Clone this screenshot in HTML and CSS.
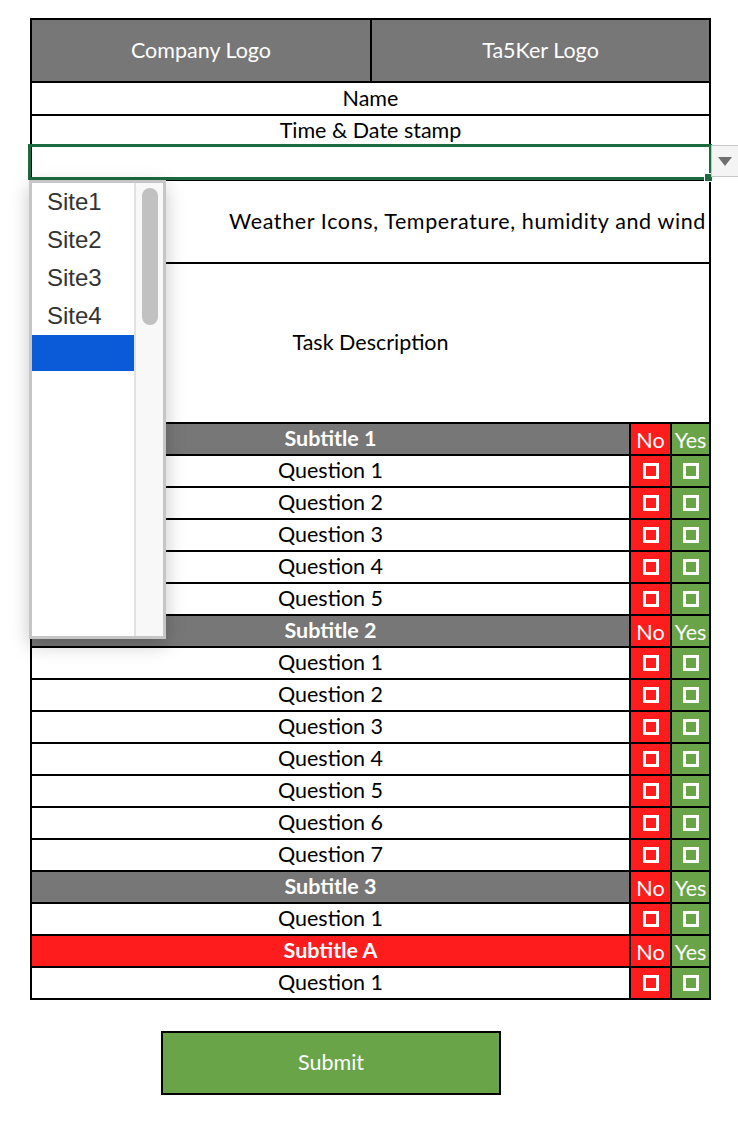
FILE: index.html
```html
<!DOCTYPE html>
<html>
<head>
<meta charset="utf-8">
<link rel="stylesheet" href="styles.css">
</head>
<body>
<div class="sheet">
  <div class="row head">
    <div class="cell">Company Logo</div>
    <div class="cell sep">Ta5Ker Logo</div>
  </div>
  <div class="row name"><div class="cell">Name</div></div>
  <div class="row time"><div class="cell">Time &amp; Date stamp</div></div>
  <div class="row select">
    <div class="selection"><span class="handle"></span></div>
    <div class="drop-btn"><span class="tri"></span></div>
    <div class="listbox">
      <div class="items">
        <div class="item">Site1</div>
        <div class="item">Site2</div>
        <div class="item">Site3</div>
        <div class="item">Site4</div>
        <div class="item active"></div>
      </div>
      <div class="scroll"><div class="thumb"></div></div>
    </div>
  </div>
  <div class="row weather"><div class="cell right wide">Weather Icons, Temperature, humidity and wind</div></div>
  <div class="row task"><div class="cell">Task Description</div></div>

  <div class="row q sub gray"><div class="cell">Subtitle 1</div><div class="no">No</div><div class="yes">Yes</div></div>
  <div class="row q"><div class="cell">Question 1</div><div class="no"><span class="box"></span></div><div class="yes"><span class="box"></span></div></div>
  <div class="row q"><div class="cell">Question 2</div><div class="no"><span class="box"></span></div><div class="yes"><span class="box"></span></div></div>
  <div class="row q"><div class="cell">Question 3</div><div class="no"><span class="box"></span></div><div class="yes"><span class="box"></span></div></div>
  <div class="row q"><div class="cell">Question 4</div><div class="no"><span class="box"></span></div><div class="yes"><span class="box"></span></div></div>
  <div class="row q"><div class="cell">Question 5</div><div class="no"><span class="box"></span></div><div class="yes"><span class="box"></span></div></div>

  <div class="row q sub gray"><div class="cell">Subtitle 2</div><div class="no">No</div><div class="yes">Yes</div></div>
  <div class="row q"><div class="cell">Question 1</div><div class="no"><span class="box"></span></div><div class="yes"><span class="box"></span></div></div>
  <div class="row q"><div class="cell">Question 2</div><div class="no"><span class="box"></span></div><div class="yes"><span class="box"></span></div></div>
  <div class="row q"><div class="cell">Question 3</div><div class="no"><span class="box"></span></div><div class="yes"><span class="box"></span></div></div>
  <div class="row q"><div class="cell">Question 4</div><div class="no"><span class="box"></span></div><div class="yes"><span class="box"></span></div></div>
  <div class="row q"><div class="cell">Question 5</div><div class="no"><span class="box"></span></div><div class="yes"><span class="box"></span></div></div>
  <div class="row q"><div class="cell">Question 6</div><div class="no"><span class="box"></span></div><div class="yes"><span class="box"></span></div></div>
  <div class="row q"><div class="cell">Question 7</div><div class="no"><span class="box"></span></div><div class="yes"><span class="box"></span></div></div>

  <div class="row q sub gray"><div class="cell">Subtitle 3</div><div class="no">No</div><div class="yes">Yes</div></div>
  <div class="row q"><div class="cell">Question 1</div><div class="no"><span class="box"></span></div><div class="yes"><span class="box"></span></div></div>

  <div class="row q sub red"><div class="cell">Subtitle A</div><div class="no">No</div><div class="yes">Yes</div></div>
  <div class="row q"><div class="cell">Question 1</div><div class="no"><span class="box"></span></div><div class="yes"><span class="box"></span></div></div>
</div>
<div class="submit">Submit</div>
</body>
</html>
```
FILE: styles.css
```css
html, body { margin: 0; padding: 0; background: #fff; }
body {
  font-family: Lato, "Open Sans", sans-serif;
  font-size: 21.5px;
  color: #000;
}
.sheet {
  margin: 18px 0 0 30px;
  width: 681px;
  box-sizing: border-box;
  border: 2px solid #000;
  border-bottom: none;
}
.row {
  border-bottom: 2px solid #000;
  display: flex;
  position: relative;
}
.cell {
  flex: 1;
  display: flex;
  align-items: center;
  justify-content: center;
  white-space: nowrap;
  padding-bottom: 2px;
  box-sizing: border-box;
}
.cell.right { justify-content: flex-end; padding-right: 3px; }
.cell.wide { letter-spacing: 0.62px; }
.head { height: 61px; background: #777777; color: #fff; }
.head .cell { flex: 0 0 338px; }
.head .cell.sep { flex: 1; border-left: 2px solid #000; }
.name { height: 31px; }
.time { height: 29px; }
.select { height: 32px; z-index: 4; }
.weather { height: 81px; }
.task { height: 158px; }
.q {
  height: 30px;
  display: grid;
  grid-template-columns: 597px 41px 39px;
}
.no, .yes {
  border-left: 2px solid #000;
  display: flex;
  align-items: center;
  justify-content: center;
  color: #fff;
  padding-bottom: 1px;
  box-sizing: border-box;
}
.no { background: #ff1c1c; }
.yes { background: #69a448; }
.sub .cell { font-weight: bold; color: #fff; }
.sub .no, .sub .yes { padding-bottom: 0; padding-top: 2px; }
.sub.gray .cell { background: #777777; }
.sub.red .cell { background: #ff1c1c; }
.box {
  width: 16px;
  height: 16px;
  box-sizing: border-box;
  border: 3px solid #fff;
}
.selection {
  position: absolute;
  left: -4px;
  top: -3px;
  width: 684px;
  height: 36px;
  box-sizing: border-box;
  border: 3px solid #1c6a3f;
  z-index: 2;
}
.handle {
  position: absolute;
  right: -4px;
  bottom: -5px;
  width: 7px;
  height: 7px;
  background: #1c6a3f;
  border: 1px solid #fff;
}
.drop-btn {
  position: absolute;
  left: 679px;
  top: -2px;
  width: 30px;
  height: 32px;
  background: #f4f4f4;
  border: 1px solid #c9c9c9;
  border-right: none;
  display: flex;
  align-items: center;
  justify-content: flex-start;
  padding-left: 6px;
  box-sizing: border-box;
  z-index: 3;
}
.tri {
  width: 0; height: 0;
  border-left: 7px solid transparent;
  border-right: 7px solid transparent;
  border-top: 9px solid #6f6f6f;
}
.listbox {
  position: absolute;
  left: -3px;
  top: 33px;
  width: 137px;
  height: 459px;
  box-sizing: border-box;
  border: 3px solid #c6c6c6;
  background: #fff;
  display: flex;
  box-shadow: 0 6px 18px rgba(0,0,0,0.22);
  z-index: 5;
}
.items {
  width: 102px;
  border-right: 2px solid #e2e2e2;
}
.item {
  height: 38px;
  line-height: 38px;
  padding-left: 15px;
  font-family: "Liberation Sans", Arial, sans-serif;
  font-size: 24px;
  color: #333;
}
.item.active { background: #0b5bd8; height: 36px; }
.scroll {
  flex: 1;
  background: #f8f8f8;
  padding: 5px 0 0 6px;
}
.thumb {
  width: 16px;
  height: 137px;
  border-radius: 8px;
  background: #c1c1c1;
}
.submit {
  margin: 31px 0 0 161px;
  width: 340px;
  height: 64px;
  box-sizing: border-box;
  border: 2px solid #000;
  background: #69a448;
  color: #fff;
  display: flex;
  align-items: center;
  justify-content: center;
  padding-bottom: 2px;
}
```
